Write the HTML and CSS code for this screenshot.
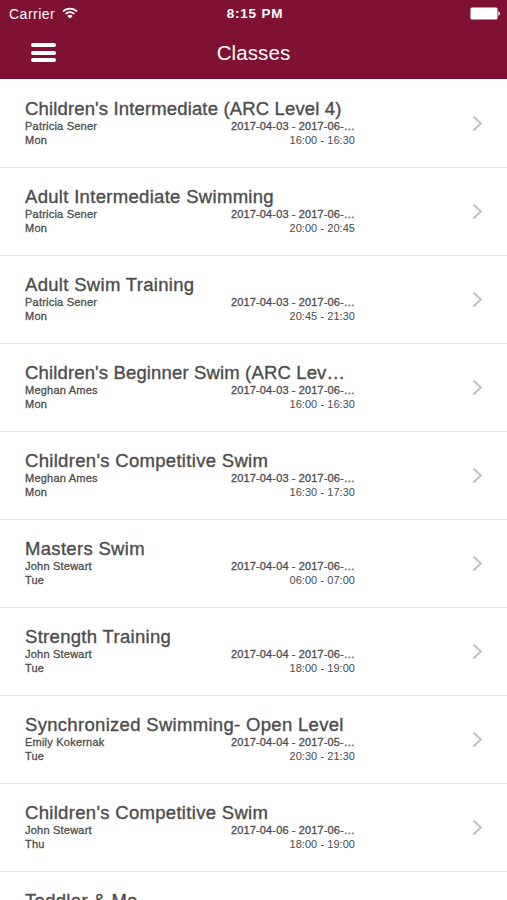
FILE: index.html
```html
<!DOCTYPE html>
<html lang="en">
<head>
  <meta charset="UTF-8" />
  <meta name="viewport" content="width=device-width, initial-scale=1.0"/>
  <title>Classes</title>
  <link rel="stylesheet" href="styles.css">
</head>
<body>
  <header class="header">
    <div class="status-bar">
      <div class="carrier">
        <span class="carrier-name">Carrier</span>
        <svg class="wifi" width="16" height="12" viewBox="0 0 16 12" fill="none" stroke="#fff" stroke-width="1.7">
          <path d="M1 4.4a10 10 0 0 1 14 0"/>
          <path d="M3.6 7a6.3 6.3 0 0 1 8.8 0"/>
          <path d="M8 11.6L5.4 8.9a3.8 3.8 0 0 1 5.2 0z" fill="#fff" stroke="none"/>
        </svg>
      </div>
      <div class="time">8:15 PM</div>
      <svg class="battery" width="31" height="13" viewBox="0 0 31 13" fill="#fff">
        <rect x="0.5" y="0.5" width="27" height="12" rx="1.5"/>
        <path d="M28.3 4.5c2.3 0.6 2.3 3.4 0 4z"/>
      </svg>
    </div>
    <div class="nav-bar">
      <div class="menu-btn"><span></span><span></span><span></span></div>
      <h1>Classes</h1>
    </div>
  </header>

  <div class="class-list" id="classList"></div>

  <script>
    const classList = document.getElementById('classList');

    const classes = [
      { name: "Children's Intermediate (ARC Level 4)", tight: true, teacher: 'Patricia Sener', day: 'Mon', dates: '2017-04-03 - 2017-06-…', time: '16:00 - 16:30' },
      { name: 'Adult Intermediate Swimming', teacher: 'Patricia Sener', day: 'Mon', dates: '2017-04-03 - 2017-06-…', time: '20:00 - 20:45' },
      { name: 'Adult Swim Training', teacher: 'Patricia Sener', day: 'Mon', dates: '2017-04-03 - 2017-06-…', time: '20:45 - 21:30' },
      { name: "Children's Beginner Swim (ARC Lev…", tight: true, teacher: 'Meghan Ames', day: 'Mon', dates: '2017-04-03 - 2017-06-…', time: '16:00 - 16:30' },
      { name: "Children's Competitive Swim", teacher: 'Meghan Ames', day: 'Mon', dates: '2017-04-03 - 2017-06-…', time: '16:30 - 17:30' },
      { name: 'Masters Swim', teacher: 'John Stewart', day: 'Tue', dates: '2017-04-04 - 2017-06-…', time: '06:00 - 07:00' },
      { name: 'Strength Training', teacher: 'John Stewart', day: 'Tue', dates: '2017-04-04 - 2017-06-…', time: '18:00 - 19:00' },
      { name: 'Synchronized Swimming- Open Level', teacher: 'Emily Kokernak', day: 'Tue', dates: '2017-04-04 - 2017-05-…', time: '20:30 - 21:30' },
      { name: "Children's Competitive Swim", teacher: 'John Stewart', day: 'Thu', dates: '2017-04-06 - 2017-06-…', time: '18:00 - 19:00' },
      { name: 'Toddler & Me' }
    ];

    function addText(parent, className, text) {
      const el = document.createElement('div');
      el.className = className;
      el.textContent = text;
      parent.appendChild(el);
    }

    // Render class rows
    classes.forEach(item => {
      const row = document.createElement('div');
      row.className = 'class-row';

      const info = document.createElement('div');
      info.className = 'class-info';
      addText(info, 'class-name' + (item.tight ? ' tight' : ''), item.name);
      if (item.teacher) {
        addText(info, 'detail', item.teacher);
        addText(info, 'detail right', item.dates);
        addText(info, 'detail', item.day);
        addText(info, 'detail right light', item.time);
      }
      row.appendChild(info);

      row.insertAdjacentHTML('beforeend',
        '<svg class="chevron" width="11" height="17" viewBox="0 0 11 17"><path d="M1.5 1.5l7.3 7-7.3 7"/></svg>');
      classList.appendChild(row);
    });
  </script>
</body>
</html>
```

FILE: styles.css
```css
body {
  font-family: "Liberation Sans", Arial, sans-serif;
  background: #fff;
  color: #4c4c4c;
  margin: 0;
  height: 900px;
  overflow: hidden;
}

.header {
  background: #7f1133;
  color: #fff;
  height: 79px;
}

.status-bar {
  display: grid;
  grid-template-columns: 1fr auto 1fr;
  align-items: center;
  height: 27px;
  padding: 0 6px 0 9px;
  font-size: 14px;
}

.carrier {
  display: flex;
  align-items: center;
  gap: 7px;
}

.carrier-name {
  letter-spacing: 0.5px;
}

.wifi {
  margin-bottom: 2px;
}

.time {
  font-weight: bold;
  font-size: 13.5px;
  letter-spacing: 0.8px;
}

.battery {
  justify-self: end;
}

.nav-bar {
  display: grid;
  grid-template-columns: 1fr auto 1fr;
  align-items: center;
  height: 51px;
  padding: 0 31px;
}

.menu-btn {
  display: flex;
  flex-direction: column;
  gap: 3.4px;
  width: 25px;
}

.menu-btn span {
  height: 4px;
  border-radius: 2px;
  background: #fff;
}

h1 {
  margin: 0;
  font-size: 20.5px;
  font-weight: normal;
  letter-spacing: 0.1px;
}

.class-row {
  display: flex;
  justify-content: space-between;
  box-sizing: border-box;
  height: 88px;
  padding: 18px 24px 0 25px;
  border-bottom: 1px solid #e4e4e4;
}

.class-row:first-child {
  height: 89px;
  padding-top: 19px;
}

.class-info {
  display: grid;
  grid-template-columns: 1fr auto;
  grid-template-rows: 22px 13.5px 13.5px;
  width: 330px;
}

.class-name {
  grid-column: 1 / 3;
  font-size: 18.5px;
  line-height: 21px;
  letter-spacing: 0.31px;
  white-space: nowrap;
  -webkit-text-stroke: 0.35px #4c4c4c;
}

.class-name.tight {
  letter-spacing: 0.15px;
}

.detail {
  font-size: 11px;
  line-height: 13.5px;
  letter-spacing: 0.22px;
  -webkit-text-stroke: 0.3px #4c4c4c;
}

.right {
  text-align: right;
  letter-spacing: 0.13px;
}

.light {
  letter-spacing: 0.05px;
  -webkit-text-stroke: 0;
}

.chevron {
  margin-top: 17px;
  fill: none;
  stroke: #bfbfc2;
  stroke-width: 2;
}
```
